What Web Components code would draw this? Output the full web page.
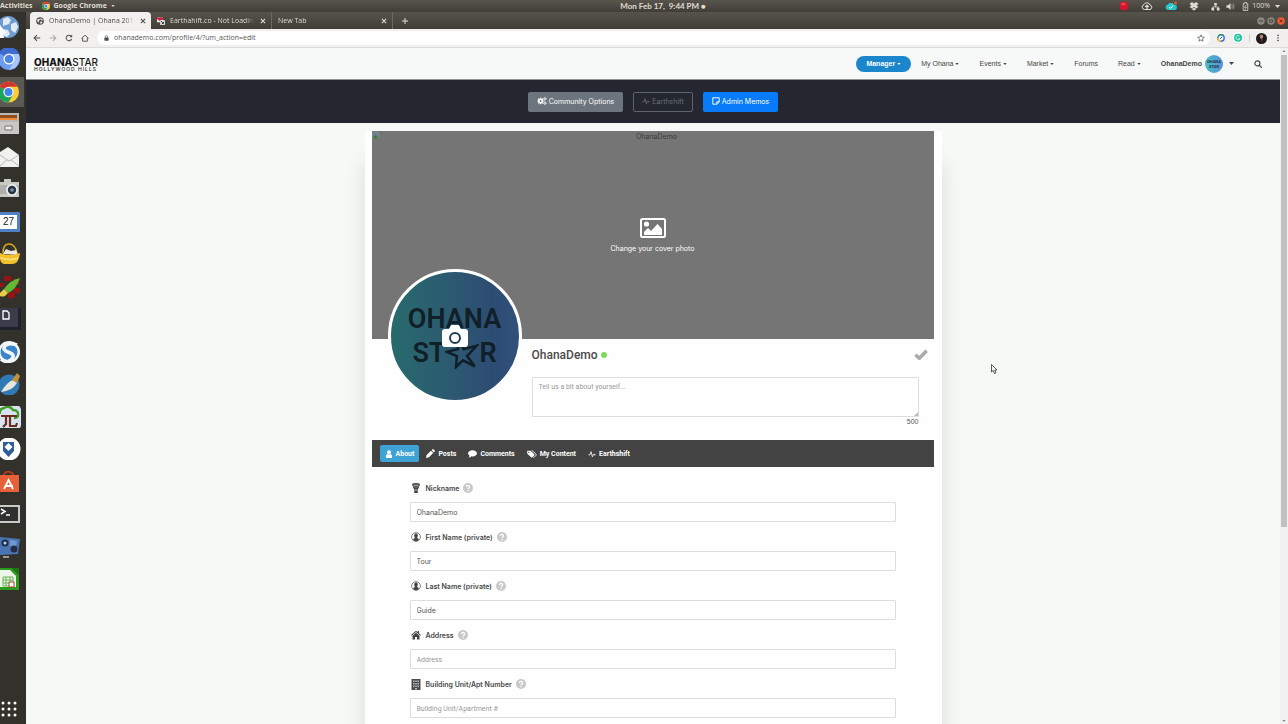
<!DOCTYPE html>
<html lang="en">
<head>
<meta charset="utf-8">
<title>OhanaDemo | Ohana 2019</title>
<style>
  html, body { margin: 0; height: 100%; overflow: hidden; }
  body { font-family: Inter, "Liberation Sans", sans-serif; font-size: 7px; color: #444; background: #f7f9f7; }
</style>
</head>
<body>
<desktop-shell></desktop-shell>
<script>
const base = `<style>
  *, *::before, *::after { box-sizing: border-box; }
  :host { display: block; }
  :host([hidden]) { display: none; }
  button, input, textarea { font: inherit; color: inherit; margin: 0; }
  button { border: 0; padding: 0; background: none; display: inline-flex; align-items: center; justify-content: center; }
  a { color: inherit; text-decoration: none; }
</style>`;

function define(name, render) {
  customElements.define(name, class extends HTMLElement {
    connectedCallback() {
      if (this.shadowRoot) return;
      const root = this.attachShadow({ mode: 'open' });
      const template = document.createElement('template');
      template.innerHTML = base + render(this);
      root.append(template.content.cloneNode(true));
    }
  });
}

const qmark = `<circle cx="10" cy="10" r="10" fill="#c9c9c9"/><path d="M7 8a3 3 0 1 1 4.500 2.500Q10 11.300 10 12.500" fill="none" stroke="#fff" stroke-width="2.600"/><circle cx="10" cy="15.300" r="1.500" fill="#fff"/>`;
const chrome = `<circle cx="10" cy="10" r="10" fill="#fccd35"/><path d="M10 10 1.340 5A10 10 0 0 1 18.660 5Z" fill="#d3352f"/><path d="M10 10 1.340 5A10 10 0 0 0 10 20l4.300-7.500Z" fill="#1da45b"/><path d="M10 5h8.700L14.300 12.500Z" fill="#fccd35"/><circle cx="10" cy="10" r="4.900" fill="#fff"/><circle cx="10" cy="10" r="3.800" fill="#4383ee"/>`;

/* name: [viewBox width, viewBox height, markup] */
const icons = {
  caret: [10, 6, `<path d="M0 0h10L5 6z" fill="currentColor"/>`],
  chrome: [20, 20, chrome],
  globe: [20, 20, `<circle cx="10" cy="10" r="9.500" fill="#4c4c4c"/><path d="M3 6l5-2 2 3-3 3 1 3-2 1-3-4zM11 3l5 2 1 4-4-1-2-2zM10 12l5-1 1 2-3 4-2 0z" fill="#eceae7"/>`],
  mailtab: [20, 20, `<rect x="0" y="1" width="15" height="12" rx="1" fill="#f5e9ea"/><path d="M0 1h15v5L7 10 0 5z" fill="#d0203c"/><path d="M8 8h12v12H8z" fill="#e9e5e2"/><path d="M10 10l7 8M18 12l-6 6" stroke="#333" stroke-width="2.500"/>`],
  close: [10, 10, `<path d="M1.500 1.500l7 7M8.500 1.500l-7 7" stroke="currentColor" stroke-width="1.800"/>`],
  plus: [10, 10, `<path d="M5 0v10M0 5h10" stroke="currentColor" stroke-width="1.600"/>`],
  back: [20, 20, `<path d="M18 10H4M10 3l-7 7 7 7" fill="none" stroke="currentColor" stroke-width="2.600"/>`],
  forward: [20, 20, `<path d="M2 10h14M10 3l7 7-7 7" fill="none" stroke="currentColor" stroke-width="2.600"/>`],
  reload: [20, 20, `<path d="M16.500 12.500a7 7 0 1 1-1.500-7.500" fill="none" stroke="currentColor" stroke-width="2.600"/><path d="M18 1v7h-7z" fill="currentColor"/>`],
  home: [20, 20, `<path d="M1 11l9-8 9 8M4 10v8h12v-8" fill="none" stroke="currentColor" stroke-width="2.200"/>`],
  lock: [16, 20, `<rect x="1" y="8" width="14" height="11" rx="1.500" fill="currentColor"/><path d="M4 9V6a4 4 0 0 1 8 0v3" fill="none" stroke="currentColor" stroke-width="2.200"/>`],
  star: [20, 20, `<path d="M10 2l2.400 5.600 6 .5-4.600 4 1.400 5.900L10 14.800 4.800 18l1.400-5.900-4.600-4 6-.5z" fill="none" stroke="currentColor" stroke-width="1.700"/>`],
  gauge: [20, 20, `<circle cx="10" cy="10" r="8" fill="#fff" stroke="#3b78e7" stroke-width="3.600"/><path d="M2 10a8 8 0 0 0 8 8" fill="none" stroke="#f5bf2a" stroke-width="3.600"/><path d="M4 4.500A8 8 0 0 1 15 3.500" fill="none" stroke="#2a9d57" stroke-width="3.600"/><path d="M8 12l5-5" stroke="#2d5fb5" stroke-width="2.500"/>`],
  grammarly: [24, 24, `<circle cx="12" cy="12.500" r="11.500" fill="#dcdbd9"/><circle cx="12" cy="11.500" r="11.500" fill="#fff"/><circle cx="12" cy="11.500" r="8" fill="#15c39a"/><path d="M15 8.500a4.200 4.200 0 1 0 1 4.500h-3" fill="none" stroke="#fff" stroke-width="1.600"/>`],
  face: [20, 20, `<circle cx="10" cy="10" r="10" fill="#1d1b1e"/><ellipse cx="10" cy="6.500" rx="3" ry="4" fill="#b98672"/><path d="M9 11h3l-1 7z" fill="#8f2f35"/>`],
  dots: [20, 20, `<g fill="currentColor"><circle cx="10" cy="3.500" r="2"/><circle cx="10" cy="10" r="2"/><circle cx="10" cy="16.500" r="2"/></g>`],
  record: [20, 20, `<circle cx="10" cy="10" r="9" fill="#d5152b"/><ellipse cx="9" cy="6" rx="5" ry="3" fill="#ec3f4d"/>`],
  cloudup: [24, 20, `<path d="M7 17a5 5 0 0 1-1-9.800A6.500 6.500 0 0 1 18 8a4.600 4.600 0 0 1 0 9z" fill="none" stroke="#e5e2db" stroke-width="2"/><path d="M12 16V9M8.500 12 12 8.500l3.500 3.500" fill="none" stroke="#e5e2db" stroke-width="2.200"/>`],
  cloudok: [24, 20, `<path d="M6 18a5.500 5.500 0 0 1-.5-10.800A7 7 0 0 1 18 7a5.500 5.500 0 0 1 .5 11z" fill="#25c5c9"/><path d="M8 12l3 3 5-6" fill="none" stroke="#fff" stroke-width="2"/><circle cx="21" cy="4" r="3" fill="#e0533c"/>`],
  dropbox: [20, 20, `<path d="M6 2l4 3 4-3 5 4-4 3 4 3-5 3-4-3-4 3-5-3 4-3-4-3zM5 16l5-2 5 2-5 3z" fill="#dfdbd2"/>`],
  network: [20, 20, `<path d="M7 2h6v6H7zM1 13h6v6H1zM13 13h6v6h-6z" fill="#dfdbd2"/><path d="M10 8v3M4 14v-3h12v3" fill="none" stroke="#dfdbd2" stroke-width="1.800"/>`],
  sound: [20, 20, `<path d="M1 7h4l5-5v16l-5-5H1z" fill="#dfdbd2"/><path d="M12.500 6q3 4 0 8M15.500 3.500q5 6.500 0 13" fill="none" stroke="#b5b2aa" stroke-width="1.700"/>`],
  battery: [20, 20, `<path d="M5 3.500h3V1h4v2.500h3V19H5z" fill="none" stroke="#dfdbd2" stroke-width="1.800"/><path d="M12 6l-4 6h4l-3 5" fill="none" stroke="#dfdbd2" stroke-width="1.600"/>`],
  winmin: [20, 20, `<circle cx="10" cy="10" r="9.500" fill="#8a877e"/><path d="M5 10h10" stroke="#3c3b37" stroke-width="2.400"/>`],
  winmax: [20, 20, `<circle cx="10" cy="10" r="9.500" fill="#8a877e"/><path d="M6 7h8v6H6z" fill="none" stroke="#3c3b37" stroke-width="2"/>`],
  winclose: [20, 20, `<circle cx="10" cy="10" r="9.500" fill="#ee5a30"/><path d="M6.500 6.500l7 7M13.500 6.500l-7 7" stroke="#5b2413" stroke-width="2"/>`],
  search: [20, 20, `<circle cx="8.500" cy="8.500" r="6.300" fill="none" stroke="currentColor" stroke-width="2.800"/><path d="M13 13l5.500 5.500" stroke="currentColor" stroke-width="3.200" stroke-linecap="round"/>`],
  cogs: [26, 22, `<circle cx="9" cy="11" r="4.800" fill="none" stroke="currentColor" stroke-width="4.200"/><path d="M9 2v4M9 16v4M0 11h4M14 11h4M2.600 4.600l3 3M12.400 14.400l3 3M2.600 17.400l3-3M12.400 7.600l3-3" stroke="currentColor" stroke-width="3.400"/><g fill="none" stroke="currentColor"><circle cx="21" cy="5" r="2.500" stroke-width="2.200"/><circle cx="21" cy="17" r="2.500" stroke-width="2.200"/><path d="M21 0v10M16 5h10M21 12v10M16 17h10" stroke-width="2.400" stroke-dasharray="2 6"/></g>`],
  pulse: [20, 20, `<path d="M1 12h4L7.500 4l3.500 13 2.500-6.500H15" fill="none" stroke="currentColor" stroke-width="2" stroke-linejoin="round"/><circle cx="17" cy="12" r="2" fill="currentColor"/>`],
  note: [20, 20, `<path d="M2 2h16v10.500L12.500 18H2z" fill="none" stroke="currentColor" stroke-width="2.400"/><path d="M18 12h-6v6" fill="none" stroke="currentColor" stroke-width="2.400"/>`],
  image: [26, 20, `<rect x="1" y="1" width="24" height="18" rx="1.500" fill="none" stroke="currentColor" stroke-width="2"/><circle cx="6.500" cy="6" r="2.600" fill="currentColor"/><path d="M4 17v-3l4-4 3 3 6.500-7L22 11v6z" fill="currentColor"/>`],
  camera: [26, 23, `<path d="M3 4h4l1.500-3q.5-1 1.500-1h6q1 0 1.500 1L19 4h4q3 0 3 3v12q0 3-3 3H3q-3 0-3-3V7q0-3 3-3z" fill="#fff"/><circle cx="13" cy="13" r="5" fill="none" stroke="#1d3f52" stroke-width="2"/>`],
  broken: [16, 16, `<path d="M1 1h9l5 5v9H1z" fill="#829291"/><path d="M2 2h8v4h4v5l-3-2-4 5H2z" fill="#6f7f91"/><path d="M2 13l5-5 4 3-3 4H2z" fill="#3c7a2f"/><path d="M14 10l-6 5h6z" fill="#6a6a6a"/>`],
  check: [26, 20, `<path d="M2.500 10.500 10 17 23.500 3" fill="none" stroke="currentColor" stroke-width="6.500"/>`],
  user: [20, 20, `<circle cx="10" cy="5.500" r="5" fill="currentColor"/><path d="M2 17q0-6 4-7 4 3 8 0 4 1 4 7 0 3-3 3H5q-3 0-3-3z" fill="currentColor"/>`],
  pencil: [20, 20, `<path d="M0 20l1.500-6.500L11 4l5 5-9.500 9.500zM12.500 2.500l2-2q1-1 2 0l3 3q1 1 0 2l-2 2z" fill="currentColor"/>`],
  comment: [20, 20, `<path d="M10 2.500c5.500 0 10 3 10 7s-4.500 7-10 7q-1.300 0-2.500-.2Q5 19 1.500 19q2-2 1.800-4.500Q0 12.500 0 9.500c0-4 4.500-7 10-7z" fill="currentColor"/>`],
  tags: [24, 20, `<path d="M0 2h7.500q1.500 0 2.500 1l8 8q1 1 0 2l-5.500 5.500q-1 1-2 0L1 10Q0 9 0 7.500z" fill="currentColor"/><circle cx="4" cy="6" r="1.600" fill="#444"/><path d="M11 2h2l9.500 9q1 1 0 2L17 18.500q-1 1-2 .3" fill="none" stroke="currentColor" stroke-width="2.200"/>`],
  agent: [20, 20, `<path d="M3 1q7-2 14 0l1 4-2 1q0 5-2 6l-1 2 1 5q-4 2-8 0l1-5-1-2q-2-1-2-6L2 5z" fill="#444"/><path d="M5 4.500h10M7 8h2M11 8h2M8 14h4" stroke="#d8d8d8" stroke-width="1.600"/>`],
  person: [20, 20, `<circle cx="10" cy="10" r="8.800" fill="#fff" stroke="#666" stroke-width="1.600"/><path d="M10 2.500q4 0 3.600 5-.3 3-1.600 4l4 3q-2 4-6 4t-6-4l4-3q-1.300-1-1.600-4-.4-5 3.600-5z" fill="#444"/>`],
  house: [20, 20, `<path d="M0 10 10 1.500l3.500 3V2H16v4.600L20 10l-1.200 1.300L10 4.200l-8.800 7.100z" fill="#444"/><path d="M3 11.300 10 5.700l7 5.600V19h-5v-5H8v5H3z" fill="#444"/>`],
  building: [20, 22, `<path d="M1 0h18v22H1z" fill="#4a4a4a"/><path d="M4 3h3v3H4zM8.500 3h3v3h-3zM13 3h3v3h-3zM4 8h3v3H4zM8.500 8h3v3h-3zM13 8h3v3h-3zM4 13h3v3H4zM8.500 13h3v3h-3zM13 13h3v3h-3zM8 18h4v3H8z" fill="#bbb"/>`],
  help: [20, 20, qmark],
  cursor: [12, 20, `<path d="M1 1v15l3.500-3 2.500 6 3-1.300-2.500-5.700H12z" fill="#fff" stroke="#222" stroke-width="1.500"/>`],
  logostar: [40, 36, `<path d="M18 2l4 11 15-4-11 12 9 12-14-7-8 8 1-13L2 16l13-3z" fill="none" stroke="#111f29" stroke-width="3"/>`],
};

/* launcher pictures, cut off at the left edge of the screen */
const apps = {
  Web: `<circle cx="8" cy="11" r="11" fill="#6f9ccf"/><path d="M3 3l5-2 3 3-2 4-6 2zM11 8l5-2 2 5-3 6-4-3zM2 13l6 1 2 4-3 3-5-2z" fill="#dfeaf5"/><path d="M0 9l6 8-3 1 1 4-4 0z" fill="#fff"/>`,
  Chromium: `<circle cx="9" cy="11" r="11" fill="#6c9bf0"/><path d="M9 11-1 5A11 11 0 0 1 19 6z" fill="#3f6bd0"/><path d="M9 6h10q2 8-4 14l-6 2 5-9z" fill="#a9c6f8"/><circle cx="9" cy="11" r="5.500" fill="#fff"/><circle cx="9" cy="11" r="4.300" fill="#4c83e8"/>`,
  Chrome: `<svg x="-2" y="0" width="22" height="22" viewBox="0 0 20 20">${chrome}</svg>`,
  Files: `<path d="M0 0h19v10H0z" fill="#b9b7b2"/><path d="M0 2h17v4H0z" fill="#8f4d21"/><path d="M0 5h17v2H0z" fill="#ef8d3b"/><path d="M0 9h19v12H0z" fill="#c9c7c3"/><path d="M5 13h7v4H5z" fill="#eee" stroke="#777"/>`,
  Mail: `<path d="M0 6l8-5 11 8v12H0z" fill="#f1f1ee"/><path d="M0 9l9 6 10-6M0 20l7-6M19 20l-8-6" fill="none" stroke="#b9b9b5"/>`,
  Camera: `<path d="M0 4h4V1h7v3h8v15H0z" fill="#c9c9c5"/><path d="M0 7h19v9H0z" fill="#b0b0ad"/><circle cx="12" cy="12" r="6" fill="#ededeb"/><circle cx="12" cy="12" r="4.200" fill="#273442"/><circle cx="12" cy="12" r="1.800" fill="#7490ac"/>`,
  Calendar: `<rect x="-3" y="1" width="23" height="20" rx="1" fill="#4f81c4"/><path d="M0 4h17v14H0z" fill="#fff"/><text x="3" y="14" font-family="Liberation Sans" font-size="10" fill="#222">27</text>`,
  Basket: `<path d="M3 10Q3 1 9 1t8 9" fill="none" stroke="#e3a91c" stroke-width="1.500"/><path d="M3 11l3-5 5 2 5-1 2 5z" fill="#ece9dd"/><path d="M0 10q10 4 20 0-1 11-8 11H4q-4-1-4-6z" fill="#f1c02c"/><path d="M0 15q10 3 18 0" fill="none" stroke="#fadf7a" stroke-width="1.500"/>`,
  Brush: `<path d="M4 0h7v5H4zM13 3h6v6h-6zM0 7h4v4H0zM14 12h6v5h-6zM8 16h7v6H8z" fill="#981414"/><path d="M20 2Q16 14 8 17l-4-4Q10 4 20 2z" fill="#62b832"/><path d="M0 17l4-4 4 4-3 3q-3 1-5 0z" fill="#e6cf46"/>`,
  Keys: `<rect x="-3" y="-1" width="24" height="24" rx="2" fill="#20222b"/><rect x="-1" y="0" width="19" height="19" rx="1" fill="#3a3d49"/><path d="M3 3h4l2 2v6H3z" fill="none" stroke="#fff" stroke-width="1.300"/>`,
  Simplenote: `<circle cx="9" cy="11" r="11" fill="#f4f7fa"/><circle cx="9" cy="11" r="8.500" fill="#3a86c8"/><path d="M17 4Q8 1 5 5t3 6 5 5-5 4.500Q4 21 1 18" fill="none" stroke="#f4f7fa" stroke-width="3.500"/>`,
  Scribus: `<circle cx="9" cy="12" r="10.500" fill="#2f79b5"/><path d="M1 19Q7 9 13 7l4 3q-5 8-16 9z" fill="#e9e5dc"/><path d="M12 7l5-7 3 3-3 7z" fill="#c3913a"/>`,
  Tree: `<rect x="-4" y="-1" width="25" height="25" rx="5" fill="#d9e2f3"/><path d="M0 8q-1-5 4-6 6-3 9 2 6 0 5 6-1 2-4 2" fill="none" stroke="#3f9d24" stroke-width="2.400"/><path d="M1 10h16M6 10v8l-3 3M10 10v10h6l1-3" fill="none" stroke="#6a2d1c" stroke-width="2.200"/>`,
  Vault: `<circle cx="9" cy="11" r="11.500" fill="#fff"/><path d="M3 4h11v9l-5.500 6L3 13z" fill="#2f5f96"/><path d="M8.500 5l4 4-4 4-4-4z" fill="#fff"/>`,
  Software: `<path d="M4 6V3q4-5 9 0v3" fill="none" stroke="#b83c1c" stroke-width="1.800"/><path d="M0 4h19v17H0z" fill="#e8603a"/><path d="M4 18l4.500-9 4.500 9M5 15h8" fill="none" stroke="#fff" stroke-width="1.800"/>`,
  Terminal: `<path d="M0 2h20v18H0z" fill="#c9c9c5"/><path d="M0 4h18v14H0z" fill="#2e2f2e"/><path d="M1 6l4 2.500L1 11M6 12h4" fill="none" stroke="#fff" stroke-width="1.500"/>`,
  Video: `<path d="M0 1l20 2-2 15-18 1z" fill="#4b74b4"/><circle cx="5" cy="7" r="3.500" fill="#1d2c47"/><circle cx="5" cy="7" r="1.500" fill="#c9d6e8"/><path d="M10 4l7 1-1 5-6 0z" fill="#6f98d2"/><circle cx="14" cy="13" r="3.500" fill="#222f44"/><path d="M3 21h6" stroke="#bbb" stroke-width="1.500"/>`,
  Calc: `<path d="M0 0h12l7 7v15H0z" fill="#2c9a1c"/><path d="M0 2h10l6 6v11H0z" fill="#eef5ea"/><path d="M12 0h7v7z" fill="#1f7413"/><path d="M3 9h10v9H3zM3 12h10M3 15h10M6 9v9M10 9v9" fill="none" stroke="#63b553"/><path d="M9 14h5v5H9z" fill="#fff" stroke="#a5472d"/>`,
};

/* <ui-icon name size>: size is the drawn width in pixels */
define('ui-icon', el => {
  const [w, h, art] = icons[el.getAttribute('name')];
  const size = +el.getAttribute('size') || 8;
  return `<style>:host { display: inline-flex; flex: none; } svg { display: block; }</style>
  <svg width="${size}" height="${Math.round(size * h / w)}" viewBox="0 0 ${w} ${h}" aria-hidden="true">${art}</svg>`;
});

define('system-bar', () => `<style>
  :host { display: grid; grid-template-columns: 48% auto 1fr; align-items: center; height: 12px; color: #e0dcd3;
    font: 700 7px/10px "Open Sans", "Noto Sans", sans-serif; background: linear-gradient(#57554b, #403e38); }
  .left, .tray, .pair { display: flex; align-items: center; }
  .left { gap: 4px; }
  .menu { margin-left: 5px; }
  .tray { justify-content: flex-end; gap: 12px; padding-right: 8px; }
  .pair { gap: 6px; font-weight: 400; }
  .power { gap: 2px; }
  .power ui-icon + span { margin-right: 3px; }
  .clock { padding-left: 2px; font: 700 8px/10px Lato, "Open Sans", sans-serif; }
</style>
<div class="left"><span>Activities</span><ui-icon class="menu" name="chrome" size="8"></ui-icon><span>Google Chrome</span><ui-icon name="caret" size="4"></ui-icon></div>
<div class="clock">Mon Feb 17, &nbsp;9:44 PM ●</div>
<div class="tray">
  <ui-icon name="record" size="10"></ui-icon><ui-icon name="cloudup" size="12"></ui-icon><ui-icon name="cloudok" size="12"></ui-icon><ui-icon name="dropbox" size="10"></ui-icon>
  <div class="pair"><ui-icon name="network" size="9"></ui-icon><ui-icon name="sound" size="9"></ui-icon>
  <div class="pair power"><ui-icon name="battery" size="9"></ui-icon><span>100%</span><ui-icon name="caret" size="5"></ui-icon></div></div>
</div>`);

define('app-dock', () => `<style>
  :host { width: 26px; flex: none; display: flex; flex-direction: column; justify-content: space-between; background: #32312c; padding: 4px 0 4px; }
  .apps { display: flex; flex-direction: column; justify-content: space-between; height: 574px; flex: none; }
  button { width: 24px; height: 22px; justify-content: flex-start; }
  button svg { width: 21px; height: 22px; flex: none; display: block; }
  .on { background: #5a5954; box-shadow: 0 4px #5a5954, 0 -4px #5a5954; }
  .grid svg { height: 18px; }
</style>
<div class="apps">${Object.entries(apps).map(([n, art]) => `<button aria-label="${n}" class="${n === 'Chrome' ? 'on' : ''}"><svg viewBox="0 0 21 22">${art}</svg></button>`).join('')}</div>
<button class="grid" aria-label="Show applications"><svg viewBox="0 0 21 18">${[3, 9, 15].map(x => [3, 9, 15].map(y => `<circle cx="${x}" cy="${y}" r="1.500" fill="#fff"/>`).join('')).join('')}</svg></button>`);

define('browser-tab', el => `<style>
  :host { display: flex; align-items: center; gap: 5px; width: 121px; padding: 0 5px 0 6px; height: 100%; color: #dedbd3; border-right: 1px solid #6b6961; }
  :host([active]) { background: #f1f0ee; color: #4c4c4c; border-radius: 4px 4px 0 0; border: 0; }
  .title { flex: 1; min-width: 0; overflow: hidden; white-space: nowrap; -webkit-mask-image: linear-gradient(to right, #000 88%, transparent); mask-image: linear-gradient(to right, #000 88%, transparent); }
</style>
${el.hasAttribute('icon') ? `<ui-icon name="${el.getAttribute('icon')}" size="8"></ui-icon>` : ''}
<span class="title"><slot></slot></span>
<button aria-label="Close tab"><ui-icon name="close" size="6"></ui-icon></button>`);

define('browser-chrome', () => `<style>
  :host { font: 7px/12px "Open Sans", "Noto Sans", sans-serif; flex: none; }
  .strip { display: flex; align-items: center; height: 17px; padding: 0 3px 0 4px; background: linear-gradient(#55534a, #403e38); }
  .new { margin-left: 9px; color: #e6e3dc; }
  .win { margin-left: auto; display: flex; gap: 2px; }
  .bar { display: flex; align-items: center; height: 19px; padding: 0 4px 0 5px; gap: 5px; background: #f1f0ee; border-bottom: 1px solid #dcdcda; color: #4c4c4c; }
  .nav { display: flex; gap: 4px; margin-right: 1px; }
  .nav button, .ext { width: 12px; height: 12px; }
  .nav .off { color: #a8a8a6; }
  .url { flex: 1; display: flex; align-items: center; gap: 4px; height: 14px; padding: 0 5px; border-radius: 7px; background: #fff; }
  .url .info { width: 8px; }
  .url input { flex: 1; min-width: 0; height: 12px; border: 0; padding: 0; outline: 0; background: none; color: #555; }
  .sep { width: 1px; height: 8px; background: #cfcfcd; }
</style>
<div class="strip">
  <browser-tab active icon="globe">OhanaDemo | Ohana 2019</browser-tab>
  <browser-tab icon="mailtab">Earthahift.co - Not Loading</browser-tab>
  <browser-tab>New Tab</browser-tab>
  <button class="new" aria-label="New tab"><ui-icon name="plus" size="6"></ui-icon></button>
  <div class="win"><button aria-label="Minimize"><ui-icon name="winmin" size="8"></ui-icon></button><button aria-label="Maximize"><ui-icon name="winmax" size="8"></ui-icon></button><button aria-label="Close"><ui-icon name="winclose" size="8"></ui-icon></button></div>
</div>
<div class="bar">
  <div class="nav"><button aria-label="Back"><ui-icon name="back"></ui-icon></button><button class="off" aria-label="Forward"><ui-icon name="forward"></ui-icon></button><button aria-label="Reload"><ui-icon name="reload"></ui-icon></button><button aria-label="Home"><ui-icon name="home"></ui-icon></button></div>
  <div class="url"><button class="info" aria-label="Site information"><ui-icon name="lock" size="5"></ui-icon></button><input aria-label="Address" value="ohanademo.com/profile/4/?um_action=edit"><button aria-label="Bookmark"><ui-icon name="star"></ui-icon></button></div>
  <button class="ext" aria-label="Extension"><ui-icon name="gauge" size="8"></ui-icon></button>
  <button class="ext" aria-label="Grammarly"><ui-icon name="grammarly" size="12"></ui-icon></button>
  <span class="sep"></span>
  <button class="ext" aria-label="Account"><ui-icon name="face" size="11"></ui-icon></button>
  <button class="ext" aria-label="Menu"><ui-icon name="dots" size="8"></ui-icon></button>
</div>`);

define('site-nav', () => `<style>
  :host { display: flex; align-items: center; justify-content: space-between; height: 32px; padding: 0 18px 0 8px; background: #f7f9f8; border-bottom: 1px solid #8d9094; color: #444; font: 7px/16px "Liberation Sans", Arial, sans-serif; }
  .logo { display: block; color: #161616; font-family: Inter, sans-serif; padding-top: 2px; }
  .name { display: block; font-size: 10px; line-height: 9px; font-weight: 500; }
  .name b { font-weight: 800; }
  .tag { display: block; font-size: 5px; line-height: 5px; font-weight: 500; letter-spacing: 1px; }
  nav { display: flex; align-items: center; }
  nav a { display: flex; align-items: center; gap: 2px; padding: 0 10px; height: 16px; }
  .on { background: #1b86cb; color: #fff; border-radius: 8px; font-weight: 700; }
  .me { font-weight: 700; gap: 3px; padding-right: 0; }
  .pic { width: 18px; height: 18px; border-radius: 50%; background: linear-gradient(90deg, #4bbdc8, #5a90d8); color: #1d3340; font: 700 4px/5px Roboto, sans-serif; display: flex; flex-direction: column; align-items: center; justify-content: center; }
  .me ui-icon { margin-left: 3px; }
  .find { margin-left: 20px; }
</style>
<a class="logo" href="#"><span class="name"><b>OHANA</b>STAR</span><span class="tag">HOLLYWOOD HILLS</span></a>
<nav>
  <a class="on" href="#">Manager <ui-icon name="caret" size="4"></ui-icon></a>
  <a href="#">My Ohana <ui-icon name="caret" size="4"></ui-icon></a>
  <a href="#">Events <ui-icon name="caret" size="4"></ui-icon></a>
  <a href="#">Market <ui-icon name="caret" size="4"></ui-icon></a>
  <a href="#">Forums</a>
  <a href="#">Read <ui-icon name="caret" size="4"></ui-icon></a>
  <a class="me" href="#">OhanaDemo <span class="pic"><span>OHANA</span><span>STAR</span></span><ui-icon name="caret" size="5"></ui-icon></a>
  <button class="find" aria-label="Search"><ui-icon name="search" size="8"></ui-icon></button>
</nav>`);

define('admin-bar', () => `<style>
  :host { display: flex; justify-content: center; align-items: center; gap: 10px; height: 43px; background: #24272f; }
  button { height: 20px; padding: 0 8px 1px; gap: 2px; border: 1px solid transparent; border-radius: 2px; color: #fff; font-size: 7px; }
  .grey { background: #6c757d; }
  .line { border-color: #5b636b; color: #6a7178; }
  .blue { background: #087bfb; }
</style>
<button class="grey"><ui-icon name="cogs" size="10"></ui-icon>Community Options</button>
<button class="line"><ui-icon name="pulse" size="8"></ui-icon>Earthshift</button>
<button class="blue"><ui-icon name="note" size="8"></ui-icon>Admin Memos</button>`);

define('profile-cover', () => `<style>
  :host { display: grid; height: 208px; background: #757575; }
  .alt, button { grid-area: 1 / 1; }
  .alt { display: flex; align-items: flex-start; line-height: 11px; color: #3b3b3b; text-align: center; }
  .alt span { flex: 1; }
  button { flex-direction: column; gap: 5px; padding-top: 2px; color: #fff; line-height: 11px; }
</style>
<div class="alt"><ui-icon name="broken" size="8"></ui-icon><span>OhanaDemo</span></div>
<button><ui-icon name="image" size="26"></ui-icon>Change your cover photo</button>`);

define('profile-photo', () => `<style>
  :host { flex: none; width: 134px; height: 134px; }
  button { position: relative; width: 100%; height: 100%; flex-direction: column; border: 3px solid #fff; border-radius: 50%; background: linear-gradient(90deg, #276b6d, #2c5a70 45%, #2c4c73 80%, #31517a);
    color: #111f29; font: 600 27px/34px Roboto, sans-serif; }
  .row { display: flex; align-items: center; }
  .cam { position: absolute; inset: 0; display: flex; align-items: center; justify-content: center; }
</style>
<button aria-label="Change your profile photo"><span class="row">OHANA</span><span class="row">ST<ui-icon name="logostar" size="34"></ui-icon>R</span><span class="cam"><ui-icon name="camera" size="26"></ui-icon></span></button>`);

define('profile-head', () => `<style>
  :host { display: flex; gap: 10px; height: 101px; padding: 0 15px 0 16px; }
  profile-photo { margin-top: -70px; }
  .info { flex: 1; min-width: 0; }
  .top { display: flex; align-items: center; justify-content: space-between; height: 31px; margin: 0 -9px 7px 0; }
  h1 { margin: 0; font: 500 12px/16px Roboto, sans-serif; color: #4a4a4a; display: flex; align-items: center; gap: 3px; }
  .dot { width: 6px; height: 6px; border-radius: 50%; background: #7ed957; }
  .save { color: #aaa; }
  textarea { display: block; width: 100%; height: 40px; padding: 5px 6px; border: 1px solid #ddd; border-radius: 1px; background: #fff; font-family: Roboto, sans-serif; line-height: 9px; outline: 0; resize: none; }
  textarea::placeholder { color: #999; }
  .box { position: relative; }
  .box::after { content: ""; position: absolute; right: 1px; bottom: 1px; border: 2px solid transparent; border-right-color: #bbb; border-bottom-color: #bbb; }
  .count { text-align: right; line-height: 9px; font-family: "Liberation Sans", sans-serif; color: #555; }
</style>
<profile-photo></profile-photo>
<div class="info">
  <div class="top"><h1>OhanaDemo <span class="dot"></span></h1><button class="save" aria-label="Save profile"><ui-icon name="check" size="14"></ui-icon></button></div>
  <div class="box"><textarea aria-label="Biography" placeholder="Tell us a bit about yourself..."></textarea></div>
  <div class="count">500</div>
</div>`);

define('profile-tabs', () => `<style>
  :host { display: flex; align-items: center; gap: 2px; height: 27px; padding: 0 8px; background: #434343; color: #fff; font-family: Roboto, sans-serif; font-weight: 700; }
  a { display: flex; align-items: center; height: 17px; gap: 3px; padding: 0 5px; border-radius: 2px; }
  .on { background: #3fa2d4; }
</style>
<a class="on" href="#"><ui-icon name="user" size="8"></ui-icon>About</a>
<a href="#"><ui-icon name="pencil" size="9"></ui-icon>Posts</a>
<a href="#"><ui-icon name="comment" size="9"></ui-icon>Comments</a>
<a href="#"><ui-icon name="tags" size="10"></ui-icon>My Content</a>
<a href="#"><ui-icon name="pulse" size="8"></ui-icon>Earthshift</a>`);

define('profile-field', el => `<style>
  :host { display: block; margin-bottom: 7px; }
  .head { display: flex; align-items: center; height: 16px; margin-bottom: 6px; }
  .icon { width: 12px; display: flex; justify-content: center; margin-right: 4px; }
  label { font-weight: 600; color: #484848; margin-right: 4px; }
  input { display: block; width: 100%; height: 20px; padding: 0 6px; border: 1px solid #ddd; border-radius: 1px; background: #fff; color: #555; outline: 0; }
  input::placeholder { color: #999; font-family: Roboto, sans-serif; }
</style>
<div class="head"><span class="icon"><ui-icon name="${el.getAttribute('icon')}" size="10"></ui-icon></span><label for="f">${el.getAttribute('label')}</label><ui-icon name="help" size="10"></ui-icon></div>
<input id="f" value="${el.getAttribute('value') || ''}" placeholder="${el.getAttribute('placeholder') || ''}">`);

define('profile-card', () => `<style>
  :host { max-width: 577px; margin: 8px auto 0; padding: 0 8px 0 7px; background: #fefefe; box-shadow: 0 32px 20px rgba(0, 0, 0, .12); }
  form { padding: 13px 38px; }
</style>
<profile-cover></profile-cover>
<profile-head></profile-head>
<profile-tabs></profile-tabs>
<form>
  <profile-field icon="agent" label="Nickname" value="OhanaDemo"></profile-field>
  <profile-field icon="person" label="First Name (private)" value="Tour"></profile-field>
  <profile-field icon="person" label="Last Name (private)" value="Guide"></profile-field>
  <profile-field icon="house" label="Address" placeholder="Address"></profile-field>
  <profile-field icon="building" label="Building Unit/Apt Number" placeholder="Building Unit/Apartment #"></profile-field>
</form>`);

define('page-scrollbar', () => `<style>
  :host { width: 8px; flex: none; display: flex; flex-direction: column; align-items: center; padding: 2px 0; background: #f1f1f1; color: #8a8a8a; }
  .up { transform: rotate(180deg); }
  .track { flex: 1; align-self: stretch; margin-top: 3px; padding: 0 1px; }
  .thumb { height: 71%; background: #c1c1c1; }
</style>
<ui-icon class="up" name="caret" size="4"></ui-icon><div class="track"><div class="thumb"></div></div><ui-icon name="caret" size="4"></ui-icon>`);

define('desktop-shell', () => `<style>
  :host { display: flex; flex-direction: column; height: 100vh; overflow: hidden; }
  .work { flex: 1; display: flex; min-height: 0; }
  .window { flex: 1; min-width: 0; display: flex; flex-direction: column; }
  .view { flex: 1; min-height: 0; display: flex; }
  main { flex: 1; min-width: 0; overflow: hidden; background: #f7f9f7; }
  .pointer { position: fixed; left: 991px; top: 364px; }
</style>
<system-bar></system-bar>
<div class="work">
  <app-dock></app-dock>
  <div class="window">
    <browser-chrome></browser-chrome>
    <div class="view"><main><site-nav></site-nav><admin-bar></admin-bar><profile-card></profile-card></main><page-scrollbar></page-scrollbar></div>
  </div>
</div>
<ui-icon class="pointer" name="cursor" size="6"></ui-icon>`);
</script>
</body>
</html>
